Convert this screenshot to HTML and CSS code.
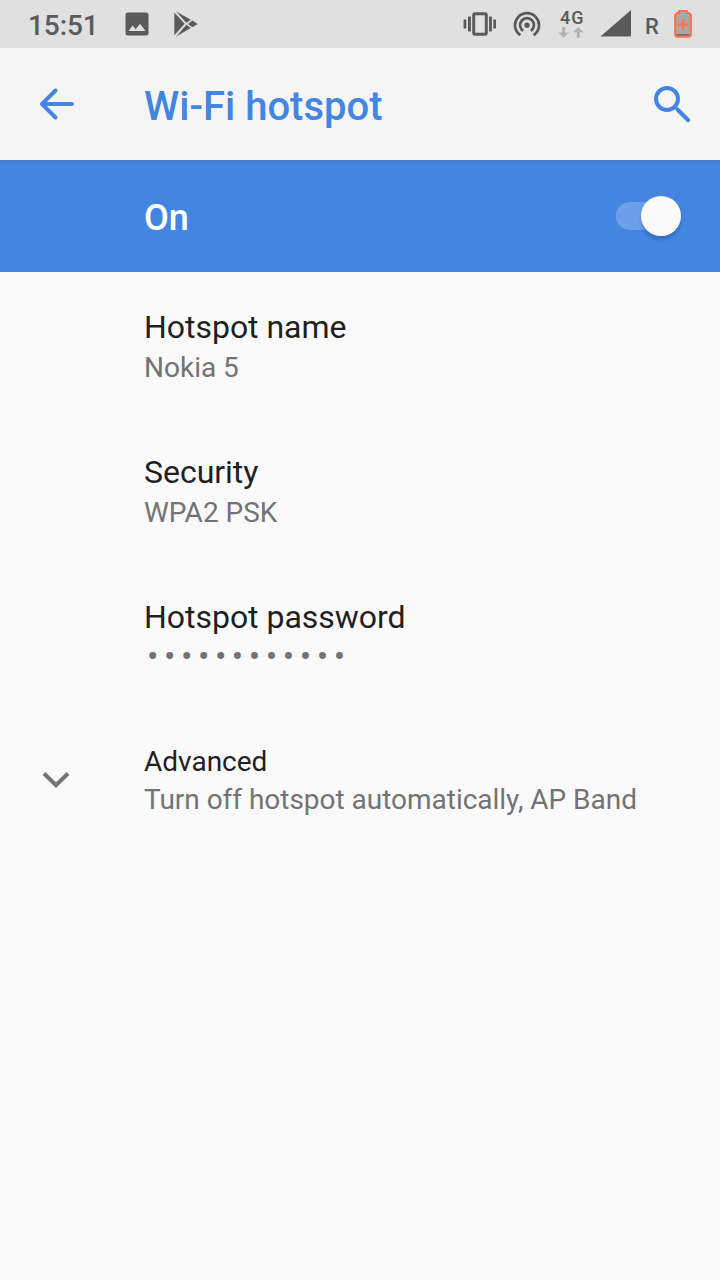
FILE: index.html
```html
<!DOCTYPE html>
<html lang="en">
<head>
<meta charset="utf-8">
<title>Wi-Fi hotspot</title>
<link rel="stylesheet" href="styles.css">
</head>
<body>
<header class="status">
  <span class="time">15:51</span>
  <svg class="picture" width="24" height="24" viewBox="0 0 24 24"><path fill="#5a5a5a" fill-rule="evenodd" d="M3 .5h18a2.500 2.500 0 0 1 2.500 2.500v18a2.500 2.500 0 0 1-2.500 2.500H3A2.500 2.500 0 0 1 .5 21V3A2.500 2.500 0 0 1 3 .5zM3.500 19h17l-5.500-7.300-4.300 5.500-3-3.600z"/></svg>
  <svg class="play" width="24" height="26" viewBox="0 0 24 26"><g fill="#5a5a5a"><path d="M.3 1.500 10.700 12.800.3 24.200z"/><path d="M2.200.4 16.800 8.800 12.400 12z"/><path d="M2.200 25.400 16.800 16.900 12.400 13.700z"/><path d="M18.300 9.600 23.700 13 18.300 16.200 14 12.900z"/></g></svg>
  <div class="signals">
    <svg class="vibrate" width="33" height="24" viewBox="0 0 33 24"><rect x="10.700" y="1.700" width="12.600" height="20.600" rx="1.500" fill="none" stroke="#5a5a5a" stroke-width="3"/><path fill="#5a5a5a" d="M.6 7.500h2.700v9H.6zM5 4.500h2.900v15H5zM26 4.500h2.900v15H26zM30.300 7.500H33v9h-2.700z"/></svg>
    <svg class="cast" width="28" height="26" viewBox="0 0 28 26"><g fill="none" stroke="#5a5a5a" stroke-width="2.700"><path d="M7.400 24.200a12 12 0 1 1 13.200 0"/><path d="M10.200 19.800a6.900 6.900 0 1 1 7.600 0"/></g><circle cx="14" cy="14.200" r="2.700" fill="#5a5a5a"/></svg>
    <div class="network"><span class="gen">4G</span>
      <svg width="26" height="11" viewBox="0 0 26 11"><path fill="#b3b3b3" d="M4.200 0h3v5.500h3.900L5.700 10.800.3 5.500h3.900zM18.800 10.800h3V5.300h3.900L20.300 0l-5.400 5.300h3.900z"/></svg>
    </div>
    <svg class="signal" width="31" height="27" viewBox="0 0 31 27"><path fill="#5a5a5a" d="M31 0v26.500H.5z"/></svg>
    <span class="roaming">R</span>
    <svg class="battery" width="18" height="29" viewBox="0 0 18 29"><path fill="#a8a8a8" stroke="#ff7351" stroke-width="2.200" d="M5.200 2h7.600v2h2.200L16.800 5.900v20.300l-1.300 1.500h-13L1.200 26.200V5.900L3 4h2.200z"/><path fill="#5a5a5a" d="M2.500 25.300h13v1.200h-13z"/><path stroke="#ff7351" stroke-width="2.600" d="M9 10.500v10M4 15.500h10"/></svg>
  </div>
</header>
<div class="toolbar">
  <svg class="back" width="36" height="32" viewBox="0 0 36 32"><path d="M33 16H3M16.500 2.500 3 16l13.500 13.500" fill="none" stroke="#4485e2" stroke-width="3.900" stroke-linecap="round" stroke-linejoin="round"/></svg>
  <h1>Wi-Fi hotspot</h1>
  <svg class="search" width="38" height="38" viewBox="0 0 38 38"><g fill="none" stroke="#4485e2" stroke-width="4"><circle cx="14" cy="14" r="11"/><path d="m24.500 24.500 10.500 10.500" stroke-width="4.200" stroke-linecap="round"/></g></svg>
</div>
<div class="master">
  <span>On</span>
  <div class="switch"><div class="thumb"></div></div>
</div>
<main>
  <section class="row"><div class="name">Hotspot name</div><div class="value">Nokia 5</div></section>
  <section class="row"><div class="name">Security</div><div class="value">WPA2 PSK</div></section>
  <section class="row"><div class="name">Hotspot password</div><div class="value dots">••••••••••••</div></section>
  <section class="advanced">
    <svg width="28" height="18" viewBox="0 0 28 18"><path d="M2 2.500 14 14.300 26 2.500" fill="none" stroke="#737373" stroke-width="4"/></svg>
    <div><div class="label">Advanced</div><div class="value">Turn off hotspot automatically, AP Band</div></div>
  </section>
</main>
</body>
</html>
```
FILE: styles.css
```css
* { box-sizing: border-box; }
body {
  margin: 0;
  width: 720px;
  min-height: 1280px;
  background: #fafafa;
  font-family: Roboto, "Liberation Sans", sans-serif;
  color: #1f1f1f;
}
svg { display: block; flex: none; }
.status {
  display: flex;
  height: 48px;
  padding-left: 28px;
  background: #e0e0e0;
  color: #5a5a5a;
}
.time {
  width: 97px;
  padding-top: 6px;
  font-size: 28px;
  line-height: 40px;
  font-weight: 500;
  letter-spacing: -.1px;
}
.picture { margin-top: 12px; }
.play { margin: 11px 0 0 25px; }
.signals { display: flex; margin-left: auto; padding-right: 28px; }
.vibrate { margin-top: 12px; }
.cast { margin: 11px 0 0 17px; }
.network { width: 26px; margin: 8px 0 0 17px; }
.gen {
  display: block;
  padding-left: 2px;
  font-size: 18px;
  line-height: 19px;
  font-weight: 500;
  letter-spacing: 1px;
}
.signal { margin: 10px 0 0 16px; }
.roaming {
  width: 30px;
  margin-left: 14px;
  padding-top: 14px;
  font-size: 22px;
  line-height: 25px;
  font-weight: 500;
}
.battery { margin: 9px -1px 0 -1px; }
.battery { margin-right: 0; }
.toolbar {
  display: flex;
  align-items: center;
  height: 112px;
  padding: 0 29px 0 39px;
  background: #f5f5f5;
}
h1 {
  margin: 6px auto 0 69px;
  font-size: 40px;
  line-height: 48px;
  font-weight: 500;
  color: #4485e2;
}
.master {
  display: flex;
  align-items: center;
  justify-content: space-between;
  height: 112px;
  padding: 0 39px 0 144px;
  background: linear-gradient(#417dd3, #4485e2 6px);
  color: #fff;
  font-size: 36px;
  font-weight: 500;
}
.master span { padding-top: 3px; }
.switch {
  display: flex;
  align-items: center;
  justify-content: flex-end;
  width: 65px;
  height: 28px;
  border-radius: 14px;
  background: #6c9fe9;
}
.thumb {
  flex: none;
  width: 40px;
  height: 40px;
  border-radius: 50%;
  background: #fafafa;
  box-shadow: 0 4px 3px rgba(30, 60, 110, .28);
}
main { padding-top: 35px; }
.row { height: 145px; padding-left: 144px; }
.name { font-size: 32px; line-height: 40px; letter-spacing: -.03px; }
.value { margin-top: 3px; font-size: 28px; line-height: 36px; color: #737373; }
.dots { margin-top: 1px; padding-left: 3px; font-size: 34px; letter-spacing: 5.500px; }
.advanced { display: flex; align-items: center; padding: 2px 0 0 42px; }
.advanced > div { margin-left: 74px; }
.advanced .value { margin-top: 2px; letter-spacing: -.02px; }
.advanced svg { margin-top: -3px; }
.label { font-size: 28px; line-height: 36px; }
```
